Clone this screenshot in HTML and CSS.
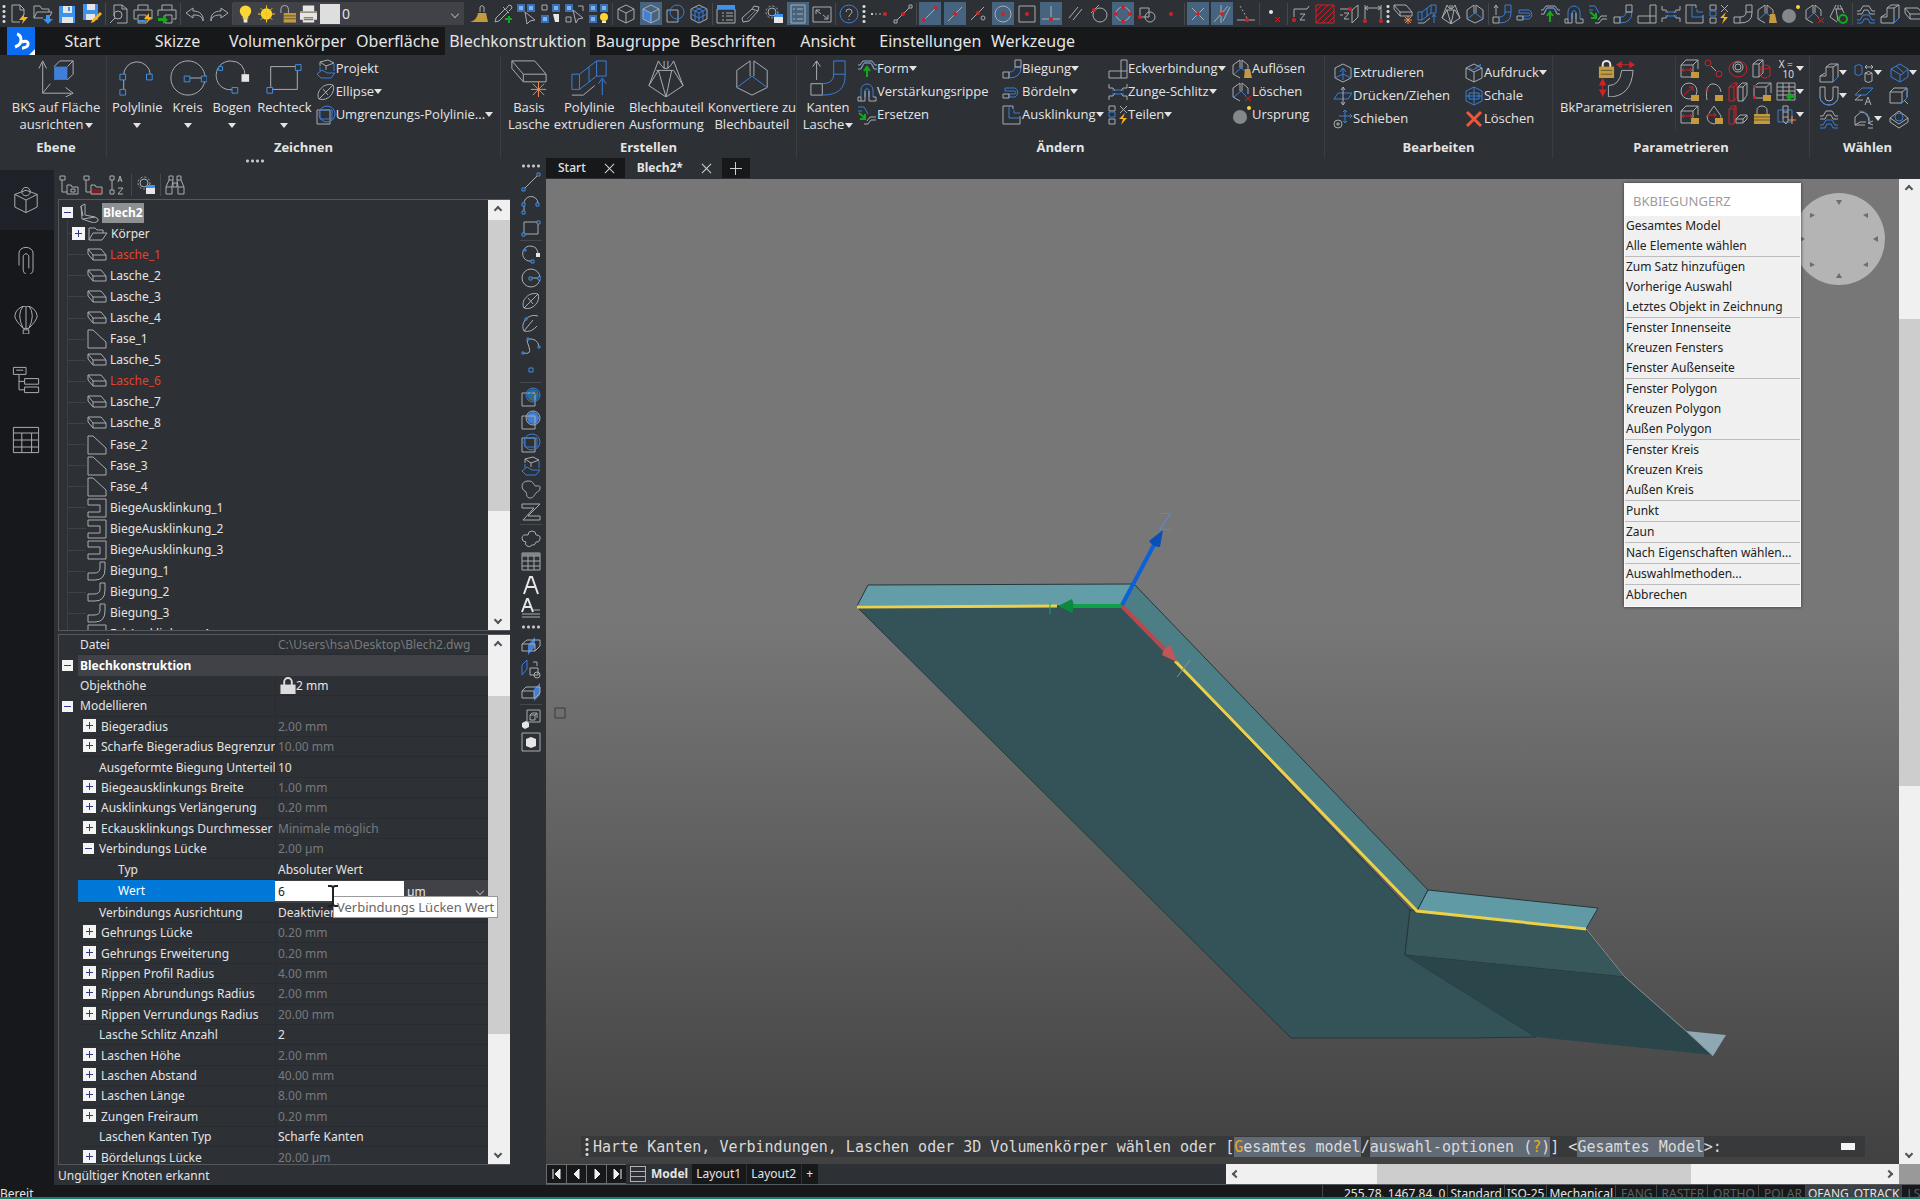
FILE: index.html
```html
<!DOCTYPE html>
<html lang="de">
<head>
    <meta charset="UTF-8">
    <meta name="viewport" content="width=device-width, initial-scale=1.0">
    <title>Blech2.dwg - BricsCAD</title>
    <link rel="stylesheet" href="styles.css">
</head>
<body>

<!-- icon sprite, 20x20 grid -->
<svg class="sprite" xmlns="http://www.w3.org/2000/svg">
    <symbol id="i-new" viewBox="0 0 20 20"><path class="w" d="M11 18H3V1h8l4 4v6M11 1v5h4"/><path class="fo" d="M15 10l-5 6h4l-1 4 6-7h-4z"/></symbol>
    <symbol id="i-open" viewBox="0 0 20 20"><path class="w" d="M1 14V2h6l2 3h7v3M1 14l3-6h15l-2 4M1 14h9"/><path class="fb" d="M13 11h4v4h3l-5 5-5-5h3z"/></symbol>
    <symbol id="i-save" viewBox="0 0 20 20"><path class="fb" d="M2 2h16v17H2z"/><path class="fw" d="M6 2h9v7H6zM5 13h11v6H5z"/><path class="fb" d="M11 3h2v4h-2z"/></symbol>
    <symbol id="i-saveas" viewBox="0 0 20 20"><path class="fb" d="M1 0h15v16H1z"/><path class="fw" d="M5 0h8v6H5zM4 10h9v6H4z"/><path class="fo" d="M18 8l2 2-8 8-3 1 1-3z"/></symbol>
    <symbol id="i-preview" viewBox="0 0 20 20"><path class="w" d="M5 12V1h8l5 4v14H8M13 1v4h5M1 19l5-5"/><circle class="w" cx="9" cy="11" r="4"/></symbol>
    <symbol id="i-print" viewBox="0 0 20 20"><path class="w" d="M5 6V1h10v5M1 6h18v9h-3M4 15H1V6M5 11h8v8H5z"/><path class="fb" d="M5 16h7v2H5z"/><path class="fo" d="M16 9l-5 6h4l-2 5 6-7h-3z"/></symbol>
    <symbol id="i-export" viewBox="0 0 20 20"><path class="w" d="M5 6V1h10v5M1 12V6h18v9h-3M8 11h7v8H8z"/><path class="fg" d="M1 14h5v-3l5 5-5 4v-3H1z"/></symbol>
    <symbol id="i-undo" viewBox="0 0 20 20"><path class="w" d="M8 4L1 9l7 5v-3c6 0 9 1 10 6 1-6-3-10-10-10z"/></symbol>
    <symbol id="i-redo" viewBox="0 0 20 20"><path class="w" d="M12 4l7 5-7 5v-3c-6 0-9 1-10 6-1-6 3-10 10-10z"/></symbol>
    <symbol id="i-bulb" viewBox="0 0 20 20"><circle class="fy" cx="10" cy="7" r="6"/><path class="fy" d="M7 11h6v4H7z"/><path class="fw" d="M8 15h4v4H8z"/></symbol>
    <symbol id="i-sun" viewBox="0 0 20 20"><circle class="fy" cx="10" cy="10" r="6"/><path class="y" d="M10 1v18M1 10h18M4 4l12 12M16 4L4 16"/></symbol>
    <symbol id="i-unlock" viewBox="0 0 20 20"><path class="w" d="M3 9V5a4 4 0 0 1 8 0v4"/><path class="fl" d="M6 9h13v10H6z"/><path class="n" d="M6 12h13M6 15h13"/></symbol>
    <symbol id="i-printer" viewBox="0 0 20 20"><path class="fw" d="M4 1h12v6h3v9h-3v3H4v-3H1V7h3z"/><path class="n" d="M1 8h18M5 14h10M5 16h10"/></symbol>
    <symbol id="i-brush" viewBox="0 0 20 20"><path class="w" d="M11 8V3q2-3 4 0v5"/><path class="fl" d="M9 9h8l2 9H1q7-2 8-9z"/></symbol>
    <symbol id="i-pipette" viewBox="0 0 20 20"><path class="w" d="M2 18l1-4 9-9 3 3-9 9zM10 3l6 6M13 5l3-4q3 0 3 3l-3 3"/><path class="g" d="M16 12v7M12 15h7"/></symbol>
    <symbol id="i-sela" viewBox="0 0 20 20"><path class="bq" d="M1 1h6v6H1zM11 1h6v6h-6z"/><path class="w" d="M8 8l10 8-5 1-3 3z"/></symbol>
    <symbol id="i-selb" viewBox="0 0 20 20"><path class="bq" d="M12 1h6v6h-6zM1 12h6v6H1z"/><path class="w" d="M1 1h5v5H1z"/><path class="fw" d="M12 10h6v8h-4z"/></symbol>
    <symbol id="i-selc" viewBox="0 0 20 20"><path class="bq" d="M1 1h6v6H1z"/><path class="w" d="M13 2h5v5M1 13h5v5H1zM8 6l10 8-5 1-2 4z"/></symbol>
    <symbol id="i-seld" viewBox="0 0 20 20"><path class="bq" d="M1 1h6v6H1zM12 1h6v6h-6zM1 12h6v6H1z"/><circle class="fy" cx="15" cy="13" r="4"/><path class="fw" d="M13 17h4v2h-4z"/></symbol>
    <symbol id="i-cube" viewBox="0 0 20 20"><path class="w" d="M2 5l8-4 8 4v10l-8 4-8-4zM2 5l8 4 8-4M10 9v10"/></symbol>
    <symbol id="i-cubeb" viewBox="0 0 20 20"><path class="fs" d="M2 5l8 4v10l-8-4z"/><path class="w" d="M2 5l8-4 8 4v10l-8 4-8-4zM2 5l8 4 8-4M10 9v10"/></symbol>
    <symbol id="i-cyl" viewBox="0 0 20 20"><path class="w" d="M2 6h11v12H2z"/><circle class="b" cx="12" cy="8" r="7"/></symbol>
    <symbol id="i-cubew" viewBox="0 0 20 20"><path class="w" d="M2 5l8-4 8 4v10l-8 4-8-4z"/><path class="b" d="M2 5l8 4 8-4M10 9v10M6 3l8 4M14 3L6 7v10M14 7v10M2 10l8 4 8-4"/></symbol>
    <symbol id="i-props" viewBox="0 0 20 20"><path class="w" d="M1 5h18v14H1zM6 9h2M6 12h2M6 16h2M10 9h7M10 12h7M10 16h7"/><path class="fb" d="M1 1h18v4H1z"/></symbol>
    <symbol id="i-eraser" viewBox="0 0 20 20"><path class="w" d="M2 14l10-9 6 2-9 10-6 1zM12 5l2-3 5 1-1 4"/><path class="b" d="M7 15l9-9"/></symbol>
    <symbol id="i-gear" viewBox="0 0 20 20"><circle class="w" cx="8" cy="8" r="4"/><circle class="wd" cx="8" cy="8" r="6"/><path class="fw" d="M10 10h9v9h-9z"/><path class="fb" d="M10 10h9v3h-9z"/></symbol>
    <symbol id="i-list" viewBox="0 0 20 20"><path class="w" d="M3 1h14v18H3zM5 5h2M9 5h6M5 10h2M9 10h6M5 15h2M9 15h6"/></symbol>
    <symbol id="i-extents" viewBox="0 0 20 20"><path class="w" d="M1 3h18v15H1zM4 10V6h4M4 6l5 4M16 11v4h-4M16 15l-5-4"/></symbol>
    <symbol id="i-help" viewBox="0 0 20 20"><circle class="b" cx="10" cy="10" r="9"/><path class="w" d="M7 8q0-3 3-3t3 3q0 1-3 4v1M10 15v1"/></symbol>
    <symbol id="i-track" viewBox="0 0 20 20"><path class="wd" d="M2 10h13"/><circle class="fr" cx="16" cy="10" r="2"/><circle class="fw" cx="3" cy="10" r="1"/></symbol>
    <symbol id="i-line" viewBox="0 0 20 20"><path class="w" d="M4 16L16 4M1 16h3v3H1zM16 1h3v3h-3z"/><circle class="fr" cx="10" cy="10" r="2"/></symbol>
    <symbol id="i-linie" viewBox="0 0 20 20"><path class="w" d="M3 17L17 3"/><path class="bs" d="M1 16h3v3H1zM16 1h3v3h-3z"/></symbol>
    <symbol id="i-end" viewBox="0 0 20 20"><path class="w" d="M3 17L17 3"/><circle class="fr" cx="4" cy="16" r="2"/><circle class="fr" cx="16" cy="4" r="2"/></symbol>
    <symbol id="i-mid" viewBox="0 0 20 20"><path class="w" d="M3 17L17 3"/><circle class="fr" cx="10" cy="10" r="2"/></symbol>
    <symbol id="i-near" viewBox="0 0 20 20"><path class="w" d="M2 16L15 3"/><circle class="fr" cx="9" cy="9" r="2"/><circle class="w" cx="14" cy="14" r="2"/></symbol>
    <symbol id="i-cen" viewBox="0 0 20 20"><circle class="w" cx="10" cy="10" r="8"/><circle class="fr" cx="10" cy="10" r="2"/></symbol>
    <symbol id="i-geo" viewBox="0 0 20 20"><path class="w" d="M2 2h16v16H2z"/><circle class="fr" cx="10" cy="10" r="2"/></symbol>
    <symbol id="i-perp" viewBox="0 0 20 20"><path class="w" d="M10 2v12M1 15h18"/><circle class="fr" cx="10" cy="15" r="2"/></symbol>
    <symbol id="i-par" viewBox="0 0 20 20"><path class="w" d="M4 14L13 3M8 16l9-11"/></symbol>
    <symbol id="i-tan" viewBox="0 0 20 20"><circle class="w" cx="11" cy="11" r="7"/><path class="w" d="M2 9l8-8"/><circle class="fr" cx="5" cy="6" r="2"/></symbol>
    <symbol id="i-quad" viewBox="0 0 20 20"><circle class="w" cx="10" cy="10" r="7"/><circle class="fr" cx="10" cy="3" r="2"/><circle class="fr" cx="10" cy="17" r="2"/><circle class="fr" cx="3" cy="10" r="2"/><circle class="fr" cx="17" cy="10" r="2"/></symbol>
    <symbol id="i-ins" viewBox="0 0 20 20"><path class="w" d="M3 4h9v9H3z"/><circle class="w" cx="13" cy="13" r="5"/><circle class="fr" cx="3" cy="13" r="2"/></symbol>
    <symbol id="i-node" viewBox="0 0 20 20"><circle class="fr" cx="10" cy="10" r="2"/></symbol>
    <symbol id="i-int" viewBox="0 0 20 20"><path class="w" d="M4 4l12 12M16 4L4 16"/><circle class="fr" cx="10" cy="10" r="2"/></symbol>
    <symbol id="i-app" viewBox="0 0 20 20"><path class="w" d="M2 18L16 2M9 1v18M18 3l-7 14"/><circle class="fr" cx="10" cy="10" r="2"/></symbol>
    <symbol id="i-ext" viewBox="0 0 20 20"><path class="wd" d="M4 2l7 12"/><path class="w" d="M1 16h18"/><circle class="fr" cx="11" cy="16" r="2"/></symbol>
    <symbol id="i-zx" viewBox="0 0 20 20"><circle class="fw" cx="8" cy="8" r="2"/><path class="r" d="M12 13l5 5M17 13l-5 5"/></symbol>
    <symbol id="i-z1" viewBox="0 0 20 20"><path class="w" d="M3 5h13M3 5v8M16 5l2-3M9 10h5l-5 6h5"/><circle class="fr" cx="3" cy="16" r="2"/></symbol>
    <symbol id="i-hatch" viewBox="0 0 20 20"><path class="r" d="M1 1h18v18H1z"/><path class="r" d="M1 7l6-6M1 13L13 1M1 19L19 1M7 19L19 7M13 19l6-6"/></symbol>
    <symbol id="i-z2" viewBox="0 0 20 20"><path class="w" d="M13 6v13l6-6V1zM1 11h3M5 9h5l-5 6h5M1 5h10"/><circle class="fr" cx="11" cy="5" r="2"/></symbol>
    <symbol id="i-dim" viewBox="0 0 20 20"><path class="w" d="M2 1v14M18 1v14M2 4h16M5 2L2 4l3 2M15 2l3 2-3 2"/><circle class="fr" cx="2" cy="17" r="2"/><circle class="fr" cx="18" cy="17" r="2"/></symbol>
    <symbol id="i-basis" viewBox="0 0 20 20"><path class="w" d="M1 1h12l6 7v4H7L1 5zM1 1l6 7h12M7 8v4"/><path class="o" d="M15 12v8M11 16h8M12 13l6 6M18 13l-6 6"/></symbol>
    <symbol id="i-extr" viewBox="0 0 20 20"><path class="b" d="M1 8h4l9-7h5v8h-5l-9 7H1zM5 8v8M14 1v8M10 4v8"/><path class="w" d="M1 19h6l6-5"/><path class="b" d="M17 19v-8M15 13l2-3 2 3"/></symbol>
    <symbol id="i-ausf" viewBox="0 0 20 20"><path class="w" d="M6 1L1 14l9 6 9-6-5-13M5 6h9M6 1q4 8 8 0M6 6l4 14 3-14M1 14l5-8M19 14l-5-8M9 1v4M11 1v4"/></symbol>
    <symbol id="i-konv" viewBox="0 0 20 20"><path class="w" d="M9 1L2 6v9l8 4 8-4V6l-7-5M9 1v8M11 1v8"/><path class="b" d="M10 9l-8 6M10 9l8 6M10 9"/></symbol>
    <symbol id="i-kant" viewBox="0 0 20 20"><path class="w" d="M4 11V1M2 4l2-3 2 3M1 13h6v6H1z"/><path class="b" d="M7 13q6 0 6-5V1h6v8q0 10-12 10M13 8h6"/></symbol>
    <symbol id="i-bord" viewBox="0 0 20 20"><path class="b" d="M3 6h10a5 5 0 0 1 0 9H7v-3h6q2-1 0-3H3z"/><path class="w" d="M1 12h6v4H1z"/></symbol>
    <symbol id="i-form" viewBox="0 0 20 20"><path class="w" d="M1 10h3l3-6h7l3 6h3M1 6h2l3-4h9l3 4h2"/><path class="b" d="M4 8l3-4h7l3 4"/><path class="g" d="M10 18V9M7 12l3-4 3 4"/></symbol>
    <symbol id="i-rippe" viewBox="0 0 20 20"><path class="b" d="M4 15V8a6 6 0 0 1 12 0v7M8 15V8q2-3 4 0v7"/><path class="w" d="M1 15h3v4h4V9M1 15v4h3M12 9v10h7v-4h-3"/></symbol>
    <symbol id="i-ersetz" viewBox="0 0 20 20"><path class="b" d="M1 2h6l4 7M1 6h4"/><path class="w" d="M19 12h-6l-3 4M19 15h-5l-3 4H7"/><path class="g" d="M2 8l6 5M8 9v5H3"/></symbol>
    <symbol id="i-bieg" viewBox="0 0 20 20"><path class="b" d="M7 13q6 0 6-5h6q0 11-12 11M7 13v6"/><path class="w" d="M1 13h6v6H1zM13 8V1h6v7z"/></symbol>
    <symbol id="i-eck" viewBox="0 0 20 20"><path class="w" d="M1 12h12V1h6v18H1zM13 12h6M13 12v7"/></symbol>
    <symbol id="i-zunge" viewBox="0 0 20 20"><path class="w" d="M1 2v4h4l2 3M19 2v4h-4l-2 3M1 18v-4h4l2-3M19 18v-4h-4l-2-3"/><path class="b" d="M4 8h12M4 12h12"/></symbol>
    <symbol id="i-ausk" viewBox="0 0 20 20"><path class="w" d="M7 1H1v18h17v-8"/><path class="b" d="M7 1v12h11M12 5v3h6"/><path class="w" d="M7 1h4v3"/></symbol>
    <symbol id="i-teil" viewBox="0 0 20 20"><path class="w" d="M1 1h6v5H1zM1 14h6v5H1z"/><path class="b" d="M1 7h6v5H1z"/><path class="w" d="M12 1l7 7M19 1l-7 7"/><path class="fo" d="M17 8l-6 6h4l-2 6 6-7h-4z"/></symbol>
    <symbol id="i-bend" viewBox="0 0 20 20"><path class="w" d="M1 13h6q6 0 6-5V1h6v8q0 10-12 10H1zM7 13v6M13 8h6"/></symbol>
    <symbol id="i-aufl" viewBox="0 0 20 20"><path class="w" d="M8 1L1 6v9l7 4M8 1v8M10 1v8M10 1l6 5v4"/><path class="b" d="M9 9l-7 6M9 9l7 5"/><path class="fl" d="M13 10h5l2 9h-8z"/></symbol>
    <symbol id="i-ball" viewBox="0 0 20 20"><circle class="fgr" cx="8" cy="12" r="7"/><circle class="fy" cx="17" cy="3" r="2"/></symbol>
    <symbol id="i-losch" viewBox="0 0 20 20"><path class="w" d="M8 1L1 6v9l7 4M8 1v8M10 1v8M10 1l6 5v6"/><path class="b" d="M9 9l-7 6M9 9l5 5"/><path class="r" d="M13 14l6 5M19 14l-6 5"/></symbol>
    <symbol id="i-rot" viewBox="0 0 20 20"><path class="w" d="M7 1L1 13l7 5M11 1l4 8M6 5h8M7 5l2 12M9 1v4"/><circle class="g" cx="14" cy="15" r="4"/></symbol>
    <symbol id="i-wave" viewBox="0 0 20 20"><path class="w" d="M1 7h3l3-5h6l3 5h3M1 10h5l2-4h4l2 4h5"/><path class="b" d="M1 16h3l3-5h6l3 5h3M1 19h5l2-4h4l2 4h5"/></symbol>
    <symbol id="i-step" viewBox="0 0 20 20"><path class="w" d="M1 13h6V4h7v15H1zM7 4l4-3h8l-5 3M19 1v13l-5 5M1 13l5-3"/><path class="b" d="M19 14l-5 5"/></symbol>
    <symbol id="i-projekt" viewBox="0 0 20 20"><path class="w" d="M4 3l8-2 6 3-8 3zM4 3v4M10 7v4"/><path class="b" d="M1 15l5-4 5 3h8l-4 5H5zM4 8v4M18 5v7"/></symbol>
    <symbol id="i-ellipse" viewBox="0 0 20 20"><path class="w" d="M3 17C-1 10 8 0 17 3c3 7-5 17-14 14zM3 17L17 3M7 7l5 6"/></symbol>
    <symbol id="i-umgr" viewBox="0 0 20 20"><path class="w" d="M1 5h13v14H1z"/><circle class="b" cx="11" cy="9" r="8"/><path class="b" d="M4 5h12v9H4z"/></symbol>
    <symbol id="i-umgr2" viewBox="0 0 20 20"><circle class="fc" cx="12" cy="8" r="6"/><path class="w" d="M1 6h13v13H1z"/><circle class="b" cx="12" cy="8" r="7"/><path class="n" d="M6 10l6-6M7 14l9-9"/></symbol>
    <symbol id="i-umgr3" viewBox="0 0 20 20"><circle class="fs" cx="12" cy="8" r="6"/><path class="w" d="M1 6h13v13H1z"/><circle class="w" cx="12" cy="8" r="7"/></symbol>
    <symbol id="i-bks" viewBox="0 0 20 20"><path class="w" d="M3 18V2M1 5l2-4 2 4M3 18h15M15 15l4 3-4 2M3 18l4-5"/><path class="fs" d="M9 4h7v7H9z"/><path class="w" d="M9 4l3-3h7l-3 3M19 1v7l-3 3"/></symbol>
    <symbol id="i-poly" viewBox="0 0 20 20"><path class="w" d="M3 16V9a7 7 0 0 1 14-1"/><path class="bs" d="M1 8h3v3H1zM1 16h3v3H1zM15 8h3v3h-3z"/></symbol>
    <symbol id="i-kreis" viewBox="0 0 20 20"><circle class="w" cx="10" cy="10" r="9"/><path class="w" d="M10 10h9"/><path class="bs" d="M8 9h3v3H8zM17 9h3v3h-3z"/></symbol>
    <symbol id="i-bogen" viewBox="0 0 20 20"><path class="w" d="M11 16C0 18-2 2 9 1q8 0 8 9"/><path class="bs" d="M10 15h3v3h-3zM3 4h2v2H3z"/><path class="fw" d="M15 8h4v4h-4z"/></symbol>
    <symbol id="i-recht" viewBox="0 0 20 20"><path class="w" d="M3 4h14v12H3z"/><path class="bs" d="M1 15h3v3H1zM16 3h3v3h-3z"/></symbol>
    <symbol id="i-extrude" viewBox="0 0 20 20"><path class="w" d="M2 5l8-4 8 4v10l-8 4-8-4z"/><path class="b" d="M10 17V6M7 9l3-4 3 4M2 15l8-4 8 4"/></symbol>
    <symbol id="i-push" viewBox="0 0 20 20"><path class="b" d="M1 13l4-6h14l-4 6z"/><path class="w" d="M10 1v18M8 4l2-3 2 3M8 16l2 3 2-3"/></symbol>
    <symbol id="i-move" viewBox="0 0 20 20"><path class="b" d="M12 1v13M6 7h13M10 3l2-2 2 2M17 5l2 2-2 2M10 12l2 2 2-2"/><circle class="w" cx="5" cy="15" r="4"/><path class="w" d="M3 15h4M5 13v4"/></symbol>
    <symbol id="i-schale" viewBox="0 0 20 20"><path class="b" d="M2 5l8-4 8 4v10l-8 4-8-4zM2 10h16M10 1v18M5 7h10v6H5z"/></symbol>
    <symbol id="i-aufdr" viewBox="0 0 20 20"><path class="w" d="M2 5l8-4 8 4v10l-8 4-8-4zM2 5l8 4 8-4M10 9v10"/><path class="b" d="M5 5l4 2 8-6M11 6l6-4"/></symbol>
    <symbol id="i-x" viewBox="0 0 20 20"><path class="ox" d="M3 3l14 14M17 3L3 17"/></symbol>
    <symbol id="i-bkpar" viewBox="0 0 20 20"><path class="wt" d="M3 5V3a2 2 0 0 1 4 0v2"/><path class="fl" d="M1 4h8v6H1z"/><path class="n" d="M2 6h6M2 8h6"/><path class="r" d="M12 3h6M3 12v6"/><path class="fr" d="M10 3l3-2v4zM20 3l-3-2v4zM3 10l-2 4h4zM3 20l-2-4h4z"/><path class="w" d="M6 14q6 0 7-8h6q-1 14-13 14z"/></symbol>
    <symbol id="i-p1" viewBox="0 0 20 20"><path class="w" d="M1 6h12v12H1zM1 6l5-5h12l-5 5M18 1v9"/><path class="r" d="M2 11h10M4 9l-2 2 2 2M10 9l2 2-2 2"/><path class="fl" d="M11 13h8v6h-8z"/></symbol>
    <symbol id="i-p2" viewBox="0 0 20 20"><circle class="r" cx="4" cy="4" r="3"/><circle class="r" cx="15" cy="15" r="3"/><path class="w" d="M7 7l5 5"/></symbol>
    <symbol id="i-p3" viewBox="0 0 20 20"><ellipse class="r" cx="10" cy="10" rx="9" ry="8"/><circle class="w" cx="10" cy="8" r="5"/><circle class="w" cx="10" cy="8" r="3"/></symbol>
    <symbol id="i-p4" viewBox="0 0 20 20"><path class="w" d="M1 5l5-4h5v13l-4 4H1zM1 5h6v13M7 5l4-4"/><path class="r" d="M9 8v9q4 4 9 0V8q-4-4-9 0 5 4 9 0"/></symbol>
    <symbol id="i-p6" viewBox="0 0 20 20"><circle class="w" cx="9" cy="9" r="8"/><path class="r" d="M4 13l9-8M9 5h4v4"/><path class="fl" d="M11 13h8v6h-8z"/></symbol>
    <symbol id="i-p7" viewBox="0 0 20 20"><path class="w" d="M3 18C1 8 4 1 10 2q6 1 7 8"/><path class="r" d="M3 6v4M1 8h4"/><path class="fl" d="M11 13h8v6h-8z"/></symbol>
    <symbol id="i-p8" viewBox="0 0 20 20"><path class="r" d="M1 5l5-4h3v14l-3 4H1zM1 5h5v14M6 5l3-4"/><path class="w" d="M10 5l4-4h5v12l-4 6h-5zM10 5h5v14M15 5l4-4"/></symbol>
    <symbol id="i-p9" viewBox="0 0 20 20"><path class="w" d="M2 5h12v11H2zM2 5l4-4h13l-5 4M19 1v10"/><path class="fr" d="M1 3h3v3H1zM1 14h3v3H1z"/><path class="fl" d="M11 13h8v6h-8z"/></symbol>
    <symbol id="i-p10" viewBox="0 0 20 20"><path class="w" d="M1 1h18v17H1zM1 5h18M1 9h18M1 13h18M7 1v17M13 1v17"/><path class="fg" d="M19 13h-4v-3l-5 5 5 4v-3h4z"/></symbol>
    <symbol id="i-p12" viewBox="0 0 20 20"><path class="w" d="M10 1L3 11q0 7 7 8 7-1 7-8z"/><path class="r" d="M3 10h9M5 8l-2 2 2 2M10 8l2 2-2 2"/><path class="fl" d="M11 13h8v6h-8z"/></symbol>
    <symbol id="i-p13" viewBox="0 0 20 20"><path class="r" d="M1 4l3-3h4v11l-2 7H1zM1 4h5v15M6 4l2-3"/><path class="w" d="M8 14l4-4h7l-4 4zM8 14v4h7l4-4v-4M15 14v4"/></symbol>
    <symbol id="i-lock" viewBox="0 0 20 20"><path class="w" d="M5 9V5a5 4 0 0 1 10 0v4"/><path class="fl" d="M2 9h16v10H2z"/><path class="n" d="M2 12h16M2 15h16"/></symbol>
    <symbol id="i-p15" viewBox="0 0 20 20"><path class="b" d="M2 5h14v12H2z"/><path class="w" d="M7 1h5v15l-2 3-3-3zM7 7h5M7 12h5"/><path class="o" d="M16 11v8M12 15h8"/></symbol>
    <symbol id="i-s2" viewBox="0 0 20 20"><path class="b" d="M1 3v8q3 3 7 0V3q-3-3-7 0z"/><path class="w" d="M11 10v8q3 3 7 0v-8q-3-3-7 0 4 3 7 0M11 4h8M13 2l-2 2 2 2M17 2l2 2-2 2"/></symbol>
    <symbol id="i-s3" viewBox="0 0 20 20"><path class="b" d="M2 6l9-5 8 5-7 6zM2 6v8l9 5V12M19 6v8l-8 5M7 3l8 7"/></symbol>
    <symbol id="i-s4" viewBox="0 0 20 20"><path class="w" d="M1 1v10a9 8 0 0 0 18 0V1h-5v10a4 4 0 0 1-8 0V1z"/><path class="b" d="M1 11a9 8 0 0 0 18 0"/></symbol>
    <symbol id="i-s5" viewBox="0 0 20 20"><path class="b" d="M1 9l7-7h11l-7 7z"/><path class="w" d="M1 14l6-5M11 19l3-8 3 8M12 16h4M1 14h8"/></symbol>
    <symbol id="i-s6" viewBox="0 0 20 20"><path class="w" d="M1 6h12v11H1zM1 6l4-4h13l-5 4M18 2v9"/><path class="b" d="M13 17l5-5V2"/><path class="w" d="M15 14l4 4"/></symbol>
    <symbol id="i-s8" viewBox="0 0 20 20"><path class="w" d="M1 8v8l5-3h6M1 8l6-5q8 1 8 10M1 16h10M19 12l-5 2 5 2M14 19h5"/><path class="b" d="M5 2q10 0 11 10"/></symbol>
    <symbol id="i-s9" viewBox="0 0 20 20"><path class="w" d="M1 9l9-7 9 7-9 6zM1 9v4l9 6 9-6V9"/><circle class="b" cx="10" cy="8" r="4"/></symbol>
    <symbol id="i-spline" viewBox="0 0 20 20"><path class="w" d="M2 16q9 2 6-6T7 2q9-1 11 7"/><path class="bs" d="M1 15h2v2H1zM6 1h2v2H6zM17 9h2v2h-2z"/></symbol>
    <symbol id="i-earc" viewBox="0 0 20 20"><path class="w" d="M17 2C6-1-1 10 3 17q7 2 13-5M3 17L12 6"/><path class="bs" d="M4 4h2v2H4z"/></symbol>
    <symbol id="i-point" viewBox="0 0 20 20"><path class="bs" d="M8 8h4v4H8z"/></symbol>
    <symbol id="i-region" viewBox="0 0 20 20"><path class="w" d="M5 13C-1 10 0 2 7 2s5 5 8 5 4-1 4 2-2 3-4 5-2 5-6 5-3-4-4-6z"/></symbol>
    <symbol id="i-wipe" viewBox="0 0 20 20"><path class="w" d="M1 2h18L7 14h12v4H2L13 6H1z"/></symbol>
    <symbol id="i-cloud" viewBox="0 0 20 20"><path class="w" d="M7 6q0-4 4-4t4 4q5 0 4 4t-4 3q-1 4-4 3-2 3-5 1t-1-4q-4 0-4-4t6-3z"/></symbol>
    <symbol id="i-table" viewBox="0 0 20 20"><path class="w" d="M1 1h18v17H1zM1 4h18M1 9h18M1 14h18M7 4v14M13 4v14"/><path class="fgr" d="M1 1h18v3H1z"/></symbol>
    <symbol id="i-text" viewBox="0 0 20 20"><path class="wt" d="M3 19L9 2h2l6 17M6 12h8"/></symbol>
    <symbol id="i-mtext" viewBox="0 0 20 20"><path class="wt" d="M1 14L6 1h1l5 13M3 9h7"/><path class="w" d="M12 12h7M1 16h18M1 19h18"/></symbol>
    <symbol id="i-sec" viewBox="0 0 20 20"><path class="fs" d="M7 9l7-8v10l-7 8z"/><path class="w" d="M1 8l5-4h13v6l-5 5H1zM1 8h13v7"/></symbol>
    <symbol id="i-sec2" viewBox="0 0 20 20"><path class="b" d="M1 6l5-5v9l-5 6z"/><path class="w" d="M9 9h8v7H9zM12 3h4v4"/><circle class="w" cx="16" cy="16" r="3"/></symbol>
    <symbol id="i-sec3" viewBox="0 0 20 20"><path class="fs" d="M13 7l6-6v12l-6 6z"/><path class="w" d="M1 9l4-4h14v6l-5 5H1zM1 9h12v7"/></symbol>
    <symbol id="i-blk" viewBox="0 0 20 20"><path class="w" d="M6 1h13v12H6zM9 6h5v5H9zM9 6l2-2h5l-2 2M16 4v5"/><path class="fw" d="M1 14l4-2 3 2v4l-4 2-3-2z"/></symbol>
    <symbol id="i-blk2" viewBox="0 0 20 20"><path class="w" d="M1 1h18v18H1z"/><path class="fw" d="M5 7l5-2 5 2v7l-5 2-5-2z"/></symbol>
    <symbol id="i-side1" viewBox="0 0 20 20"><path class="w" d="M2 6l8-3 8 3v9l-8 4-8-4zM2 6l8 4 8-4M10 10v9"/><ellipse class="w" cx="10" cy="4" rx="3" ry="3"/></symbol>
    <symbol id="i-side2" viewBox="0 0 20 20"><path class="w" d="M5 14V5a5 4 0 0 1 10 0v12a3 3 0 0 1-7 0V7q2-3 4 0v9"/></symbol>
    <symbol id="i-side3" viewBox="0 0 20 20"><path class="w" d="M10 0a8 8 0 0 0-8 7q0 3 6 9h4q6-6 6-9a8 8 0 0 0-8-7zM8 16Q3 6 8 0M12 16q5-10 0-16M10 0v16M8 17h4v3H8z"/></symbol>
    <symbol id="i-side4" viewBox="0 0 20 20"><path class="w" d="M1 1h9v5H1zM3 3h5M5 6v11h4M5 11h4M9 9h10v4H9zM9 15h10v4H9z"/></symbol>
    <symbol id="i-side5" viewBox="0 0 20 20"><path class="w" d="M1 1h18v18H1zM1 5h18M1 10h18M1 15h18M7 5v14M14 5v14"/></symbol>
    <symbol id="i-folder" viewBox="0 0 20 20"><path class="w" d="M1 16V4h6l2 2h6v3M1 16l4-7h14l-5 7z"/></symbol>
    <symbol id="i-lasche" viewBox="0 0 20 20"><path class="w" d="M1 4h13l5 6v5H6L1 9zM1 4l5 6h13M6 10v5"/></symbol>
    <symbol id="i-fase" viewBox="0 0 20 20"><path class="w" d="M1 1h5l13 12v6H1z"/></symbol>
    <symbol id="i-notch" viewBox="0 0 20 20"><path class="w" d="M1 1h18v18H1v-5h12V7H1z"/></symbol>
    <symbol id="i-bieg2" viewBox="0 0 20 20"><path class="w" d="M1 12h6q6 0 6-5V1h5v7q0 11-10 11H1z"/></symbol>
    <symbol id="i-part" viewBox="0 0 20 20"><path class="w" d="M2 3l4-2v11l10 2 3 2v2l-4 2-12-4zM2 3l2 10M4 16l12-2"/></symbol>
    <symbol id="i-t1" viewBox="0 0 20 20"><path class="w" d="M1 1h5v4H1zM3 5v12h5M8 10h4l1 2h6v7H8z"/><path class="w" d="M12 14h4v3h-4z"/></symbol>
    <symbol id="i-t2" viewBox="0 0 20 20"><path class="w" d="M1 1h5v4H1zM3 5v12h5M8 10h4l1 2h6v7H8z"/><path class="frd" d="M9 14h9v4H9z"/></symbol>
    <symbol id="i-t3" viewBox="0 0 20 20"><path class="w" d="M3 1h4v4H3zM3 15h4v4H3zM5 5v10M11 7l2-6 2 6M12 5h3M11 13h5l-5 6h5"/></symbol>
    <symbol id="i-find" viewBox="0 0 20 20"><path class="w" d="M4 1h4v4H4zM12 1h4v4h-4zM4 5l-3 7v7h6v-7l1-7M16 5l3 7v7h-6v-7l-1-7M1 12h6M13 12h6M8 8h4v4H8z"/></symbol>
</svg>

<div class="quickbar">
    <div class="tools" data-icons="| new open save saveas - preview print export - undo redo -"></div>
    <div class="layer">
        <svg class="ic"><use href="#i-bulb"/></svg>
        <svg class="ic"><use href="#i-sun"/></svg>
        <svg class="ic"><use href="#i-unlock"/></svg>
        <svg class="ic"><use href="#i-printer"/></svg>
        <span class="swatch"></span>
        <select aria-label="Layer"><option>0</option></select>
        <i class="chev down"></i>
    </div>
    <div class="tools" data-icons="brush pipette sela selb selc seld - cube *cubeb cyl cubew - props eraser gear *list extents - help | track line - *end *mid near *cen geo *perp par tan *quad ins node - *int *app ext - zx - z1 hatch z2 dim | basis extr ausf konv - kant bord form rippe ersetz bieg eck zunge ausk teil bend aufl ball losch rot - wave step lasche"></div>
</div>

<nav class="tabs">
    <button class="app" aria-label="Menü"><svg viewBox="0 0 28 28"><path d="M10 7q4 1 4 6 0 5-6 7M15 21h1q6-1 5-5-1-3-6-1"/><path class="corner" d="M28 22v6h-6z"/></svg></button>
    <a href="#">Start</a>
    <a href="#">Skizze</a>
    <a href="#">Volumenkörper</a>
    <a href="#">Oberfläche</a>
    <a href="#" class="active">Blechkonstruktion</a>
    <a href="#">Baugruppe</a>
    <a href="#">Beschriften</a>
    <a href="#">Ansicht</a>
    <a href="#">Einstellungen</a>
    <a href="#">Werkzeuge</a>
</nav>

<div class="ribbon">
    <section class="group ebene">
        <div class="cmds">
            <button class="big"><svg><use href="#i-bks"/></svg>BKS auf Fläche<br><span class="dd">ausrichten</span></button>
        </div>
        <h3>Ebene</h3>
    </section>
    <section class="group zeichnen">
        <div class="cmds">
            <button class="big"><svg><use href="#i-poly"/></svg>Polylinie<br><span class="dd"></span></button>
            <button class="big"><svg><use href="#i-kreis"/></svg>Kreis<br><span class="dd"></span></button>
            <button class="big"><svg><use href="#i-bogen"/></svg>Bogen<br><span class="dd"></span></button>
            <button class="big"><svg><use href="#i-recht"/></svg>Rechteck<br><span class="dd"></span></button>
            <div class="col">
                <button><svg class="ic"><use href="#i-projekt"/></svg>Projekt</button>
                <button class="dd"><svg class="ic"><use href="#i-ellipse"/></svg>Ellipse</button>
                <button class="dd"><svg class="ic"><use href="#i-umgr"/></svg>Umgrenzungs-Polylinie...</button>
            </div>
        </div>
        <h3>Zeichnen</h3>
    </section>
    <section class="group erstellen">
        <div class="cmds">
            <button class="big"><svg><use href="#i-basis"/></svg>Basis<br>Lasche</button>
            <button class="big"><svg><use href="#i-extr"/></svg>Polylinie<br>extrudieren</button>
            <button class="big"><svg><use href="#i-ausf"/></svg>Blechbauteil<br>Ausformung</button>
            <button class="big"><svg><use href="#i-konv"/></svg>Konvertiere zu<br>Blechbauteil</button>
        </div>
        <h3>Erstellen</h3>
    </section>
    <section class="group aendern">
        <div class="cmds">
            <button class="big"><svg><use href="#i-kant"/></svg>Kanten<br><span class="dd">Lasche</span></button>
            <div class="col c1">
                <button class="dd"><svg class="ic"><use href="#i-form"/></svg>Form</button>
                <button><svg class="ic"><use href="#i-rippe"/></svg>Verstärkungsrippe</button>
                <button><svg class="ic"><use href="#i-ersetz"/></svg>Ersetzen</button>
            </div>
            <div class="col c2">
                <button class="dd"><svg class="ic"><use href="#i-bieg"/></svg>Biegung</button>
                <button class="dd"><svg class="ic"><use href="#i-bord"/></svg>Bördeln</button>
                <button class="dd"><svg class="ic"><use href="#i-ausk"/></svg>Ausklinkung</button>
            </div>
            <div class="col c3">
                <button class="dd"><svg class="ic"><use href="#i-eck"/></svg>Eckverbindung</button>
                <button class="dd"><svg class="ic"><use href="#i-zunge"/></svg>Zunge-Schlitz</button>
                <button class="dd"><svg class="ic"><use href="#i-teil"/></svg>Teilen</button>
            </div>
            <div class="col">
                <button><svg class="ic"><use href="#i-aufl"/></svg>Auflösen</button>
                <button><svg class="ic"><use href="#i-losch"/></svg>Löschen</button>
                <button><svg class="ic"><use href="#i-ball"/></svg>Ursprung</button>
            </div>
        </div>
        <h3>Ändern</h3>
    </section>
    <section class="group bearbeiten">
        <div class="cmds low">
            <div class="col c4">
                <button><svg class="ic"><use href="#i-extrude"/></svg>Extrudieren</button>
                <button><svg class="ic"><use href="#i-push"/></svg>Drücken/Ziehen</button>
                <button><svg class="ic"><use href="#i-move"/></svg>Schieben</button>
            </div>
            <div class="col">
                <button class="dd"><svg class="ic"><use href="#i-aufdr"/></svg>Aufdruck</button>
                <button><svg class="ic"><use href="#i-schale"/></svg>Schale</button>
                <button><svg class="ic"><use href="#i-x"/></svg>Löschen</button>
            </div>
        </div>
        <h3>Bearbeiten</h3>
    </section>
    <section class="group parametrieren">
        <div class="cmds">
            <button class="big"><svg><use href="#i-bkpar"/></svg>BkParametrisieren</button>
            <div class="icongrid params">
                <button><svg class="ic"><use href="#i-p1"/></svg></button>
                <button><svg class="ic"><use href="#i-p2"/></svg></button>
                <button><svg class="ic"><use href="#i-p3"/></svg></button>
                <button><svg class="ic"><use href="#i-p4"/></svg></button>
                <button class="dd formula"><span>X =<br>&nbsp; 10</span></button>
                <button><svg class="ic"><use href="#i-p6"/></svg></button>
                <button><svg class="ic"><use href="#i-p7"/></svg></button>
                <button><svg class="ic"><use href="#i-p8"/></svg></button>
                <button><svg class="ic"><use href="#i-p9"/></svg></button>
                <button class="dd"><svg class="ic"><use href="#i-p10"/></svg></button>
                <button><svg class="ic"><use href="#i-p1"/></svg></button>
                <button><svg class="ic"><use href="#i-p12"/></svg></button>
                <button><svg class="ic"><use href="#i-p13"/></svg></button>
                <button><svg class="ic"><use href="#i-lock"/></svg></button>
                <button class="dd"><svg class="ic"><use href="#i-p15"/></svg></button>
            </div>
        </div>
        <h3>Parametrieren</h3>
    </section>
    <section class="group waehlen">
        <div class="cmds low">
            <div class="icongrid select">
                <button class="dd"><svg class="ic"><use href="#i-step"/></svg></button>
                <button class="dd"><svg class="ic"><use href="#i-s2"/></svg></button>
                <button class="dd"><svg class="ic"><use href="#i-s3"/></svg></button>
                <button class="dd"><svg class="ic"><use href="#i-s4"/></svg></button>
                <button><svg class="ic"><use href="#i-s5"/></svg></button>
                <button><svg class="ic"><use href="#i-s6"/></svg></button>
                <button><svg class="ic"><use href="#i-wave"/></svg></button>
                <button class="dd"><svg class="ic"><use href="#i-s8"/></svg></button>
                <button><svg class="ic"><use href="#i-s9"/></svg></button>
            </div>
        </div>
        <h3>Wählen</h3>
    </section>
</div>

<div class="workspace">
    <div class="left">
        <div class="dock-grip"><i class="dots"></i></div>
        <div class="panels">
            <div class="sidebar">
                <button class="active" aria-label="Struktur"><svg><use href="#i-side1"/></svg></button>
                <button aria-label="Anhänge"><svg><use href="#i-side2"/></svg></button>
                <button aria-label="Materialien"><svg><use href="#i-side3"/></svg></button>
                <button aria-label="Baugruppe"><svg><use href="#i-side4"/></svg></button>
                <button aria-label="Tabelle"><svg><use href="#i-side5"/></svg></button>
            </div>
            <div class="browser">
                <div class="tools" data-icons="t1 t2 t3 - gear - find"></div>
                <div class="box treebox">
                    <ul class="tree" id="tree"></ul>
                    <div class="vscroll">
                        <button aria-label="Hoch"><i class="chev up"></i></button>
                        <div class="track" style="--before:0;--size:291;--after:99"><i></i></div>
                        <button aria-label="Runter"><i class="chev down"></i></button>
                    </div>
                </div>
                <div class="box propbox">
                    <div class="proplist">
                        <table class="props"><tbody id="props"></tbody></table>
                    </div>
                    <div class="vscroll">
                        <button aria-label="Hoch"><i class="chev up"></i></button>
                        <div class="track" style="--before:41;--size:338;--after:110"><i></i></div>
                        <button aria-label="Runter"><i class="chev down"></i></button>
                    </div>
                    <div class="tooltip">Verbindungs Lücken Wert</div>
                    <svg class="ibeam" viewBox="0 0 12 22"><path d="M1 1h3l2 1 2-1h3M6 2v18M1 21h3l2-1 2 1h3"/></svg>
                </div>
                <p class="hint">Ungültiger Knoten erkannt</p>
            </div>
        </div>
    </div>

    <div class="drawbar">
        <div class="tools" data-icons="| linie poly recht - bogen kreis ellipse earc spline point - umgr2 umgr3 umgr projekt region wipe - cloud table text mtext | sec sec2 sec3 - blk blk2"></div>
    </div>

    <main class="document">
        <div class="doctabs">
            <button>Start <i class="close"></i></button>
            <button class="active">Blech2* <i class="close"></i></button>
            <button class="add" aria-label="Neue Zeichnung"><i class="plus"></i></button>
        </div>
        <div class="canvas">
            <div class="view">
                <svg class="model" viewBox="546 179 1353 985">
                    <g stroke="#26373a" stroke-width="1">
                        <path fill="#345359" d="M857 607l265-1 288 304-5 45 131 82-65 1H1291z"/>
                        <path fill="#639da7" d="M857 606l11-21 266-1-12 22z"/>
                        <path fill="#4c7e85" d="M1122 605l12-21 294 306-11 21z"/>
                        <path fill="#38575b" d="M1410 910l176 20 39 47-220-22z"/>
                        <path fill="#2b464b" stroke="none" d="M1405 955l220 22 61 54 27 24-177-18z"/>
                        <path fill="#5f9aa5" d="M1417 911l11-21 170 18-12 21z"/>
                        <path fill="#8fa9b4" stroke="none" d="M1686 1031l40 4-13 21z"/>
                    </g>
                    <path class="edge" d="M1586 929l39 48 61 54 27 25"/>
                    <path class="hot" d="M857 607l200-1M1175 661l242 250 169 18"/>
                    <path stroke="#0fa04a" stroke-width="4" d="M1122 606h-52"/>
                    <path fill="#0b8a3e" d="M1058 606l14-7q3 7 0 14z"/>
                    <path stroke="#12a37b" d="M1050 603v11"/>
                    <path stroke="#b8484d" stroke-width="4" d="M1122 606l46 47"/>
                    <path fill="#c0565a" d="M1177 662l-15-7q2-9 9-9z"/>
                    <path stroke="#8b8f92" d="M1190 660l-13 17"/>
                    <path stroke="#0b62d6" stroke-width="4" d="M1122 605l33-62"/>
                    <path fill="#0a50b4" d="M1163 530l-14 11q4 6 11 6z"/>
                    <text x="1159" y="530">Z</text>
                    <path class="pick" d="M555 708h10v10h-10z"/>
                </svg>
                <svg class="lookfrom" viewBox="0 0 92 92">
                    <circle cx="46" cy="46" r="46"/>
                    <path d="M43 7h6l-3 5zM43 85h6l-3-5zM7 43v6l5-3zM85 43v6l-5-3zM17 20l5 2-5 3zM75 20l-5 2 5 3zM17 74l5-2-5-3zM75 74l-5-2 5-3z"/>
                </svg>
                <div class="prompt">
                    <h4>BKBIEGUNGERZ</h4>
                    <button>Gesamtes Model</button>
                    <button>Alle Elemente wählen</button>
                    <hr>
                    <button>Zum Satz hinzufügen</button>
                    <button>Vorherige Auswahl</button>
                    <button>Letztes Objekt in Zeichnung</button>
                    <hr>
                    <button>Fenster Innenseite</button>
                    <button>Kreuzen Fensters</button>
                    <button>Fenster Außenseite</button>
                    <hr>
                    <button>Fenster Polygon</button>
                    <button>Kreuzen Polygon</button>
                    <button>Außen Polygon</button>
                    <hr>
                    <button>Fenster Kreis</button>
                    <button>Kreuzen Kreis</button>
                    <button>Außen Kreis</button>
                    <hr>
                    <button>Punkt</button>
                    <hr>
                    <button>Zaun</button>
                    <hr>
                    <button>Nach Eigenschaften wählen...</button>
                    <hr>
                    <button>Auswahlmethoden...</button>
                    <hr>
                    <button>Abbrechen</button>
                </div>
                <div class="cmdline">
                    <i class="vdots"></i>
                    <div>Harte Kanten, Verbindungen, Laschen oder 3D Volumenkörper wählen oder [<button><b>G</b>esamtes model</button>/<button>auswahl-optionen (<b>?</b>)</button>] &lt;<button>Gesamtes Model</button>&gt;:</div>
                    <button class="min" aria-label="Minimieren"></button>
                </div>
            </div>
            <div class="vscroll">
                <button aria-label="Hoch"><i class="chev up"></i></button>
                <div class="track" style="--before:120;--size:465;--after:357"><i></i></div>
                <button aria-label="Runter"><i class="chev down"></i></button>
            </div>
        </div>
        <div class="layouts">
            <button class="nav" aria-label="Erstes"><svg viewBox="0 0 12 12"><path d="M2 1v10M9 1L4 6l5 5z"/></svg></button>
            <button class="nav" aria-label="Vorheriges"><svg viewBox="0 0 12 12"><path d="M8 1L3 6l5 5z"/></svg></button>
            <button class="nav" aria-label="Nächstes"><svg viewBox="0 0 12 12"><path d="M4 1l5 5-5 5z"/></svg></button>
            <button class="nav" aria-label="Letztes"><svg viewBox="0 0 12 12"><path d="M10 1v10M3 1l5 5-5 5z"/></svg></button>
            <i class="sheet"></i>
            <button class="tab active">Model</button>
            <button class="tab">Layout1</button>
            <button class="tab">Layout2</button>
            <button class="tab">+</button>
            <div class="hscroll">
                <button aria-label="Links"><i class="chev lt"></i></button>
                <div class="track" style="--before:132;--size:314;--after:189"><i></i></div>
                <button aria-label="Rechts"><i class="chev rt"></i></button>
            </div>
            <i class="corner"></i>
        </div>
    </main>
</div>

<footer class="status">
    <span class="ready">Bereit</span>
    <span class="coords">255.78, 1467.84, 0</span>
    <span>Standard</span>
    <span>ISO-25</span>
    <span>Mechanical</span>
    <span class="off">FANG</span>
    <span class="off">RASTER</span>
    <span class="off">ORTHO</span>
    <span class="off">POLAR</span>
    <span class="on">OFANG</span>
    <span class="on">OTRACK</span>
    <span class="off last">LST</span>
</footer>

<script src="app.js"></script>
</body>
</html>
```

FILE: styles.css
```css
* {
    box-sizing: border-box;
}
body {
    margin: 0;
    height: 100vh;
    display: flex;
    flex-direction: column;
    overflow: hidden;
    background: #2d3035;
    color: #e4e4e4;
    font: 12px/16px "Noto Sans", "Open Sans", sans-serif;
}
button, select, input {
    font: inherit;
    color: inherit;
    background: none;
    border: 0;
    padding: 0;
    margin: 0;
    appearance: none;
}
h3, h4, p, ul {
    margin: 0;
    padding: 0;
}
a {
    color: inherit;
    text-decoration: none;
}
i {
    display: block;
}

/* icons */
.sprite {
    position: absolute;
    width: 0;
    height: 0;
}
svg {
    display: block;
    fill: none;
    overflow: visible;
}
symbol * {
    vector-effect: non-scaling-stroke;
}
.ic {
    width: 20px;
    height: 20px;
    flex: none;
}
.w { stroke: #a9adb0; }
.wd { stroke: #a9adb0; stroke-dasharray: 2 2; }
.wt { stroke: #e6e6e6; stroke-width: 2; }
.b { stroke: #3b7fd6; }
.bs { stroke: #3f8ee8; fill: #2d3035; }
.bq { stroke: #3d6fb0; fill: #78b4f0; stroke-width: 2; }
.r { stroke: #cf2228; }
.g { stroke: #14a81e; stroke-width: 2; }
.o { stroke: #f08a4b; }
.ox { stroke: #f0563a; stroke-width: 3; }
.y { stroke: #f5c41c; }
.n { stroke: #6b5a30; }
.fw { fill: #e6e6e6; }
.fb { fill: #3d92ec; }
.fs { fill: #3f7fd8; }
.fc { fill: #1b6fae; }
.fg { fill: #14a81e; }
.fr { fill: #cf2228; }
.frd { fill: #7c1b22; }
.fo { fill: #f5b324; }
.fy { fill: #fbd634; }
.fl { fill: #c49a3f; }
.fgr { fill: #85888b; }

.dots {
    width: 20px;
    height: 4px;
    background: radial-gradient(circle, #c8c8c8 1px, transparent 2px) 0 0 / 5px 4px;
}
.vdots {
    width: 4px;
    height: 20px;
    background: radial-gradient(circle, #d8d8d8 1px, transparent 2px) 0 0 / 4px 5px;
}
.chev {
    width: 6px;
    height: 6px;
    border: solid #505357;
    border-width: 2px 2px 0 0;
}
.chev.up { transform: rotate(-45deg); }
.chev.down { transform: rotate(135deg); }
.chev.lt { transform: rotate(-135deg); }
.chev.rt { transform: rotate(45deg); }

/* top icon bar */
.quickbar {
    display: flex;
    align-items: center;
    height: 27px;
    flex: none;
    padding-left: 2px;
}
.tools {
    display: flex;
    align-items: center;
}
.quickbar .tools:first-child {
    width: 231px;
    justify-content: space-between;
}
.quickbar .tools:last-child {
    flex: 1;
    justify-content: space-between;
    padding-left: 4px;
    margin-right: -6px;
}
.tb {
    display: grid;
    place-items: center;
    width: 22px;
    height: 23px;
    flex: none;
}
.tb.on {
    background: #46647f;
}
.tools .sep {
    width: 1px;
    height: 22px;
    background: #45484c;
}
.layer {
    display: flex;
    align-items: center;
    gap: 2px;
    width: 231px;
    height: 23px;
    padding: 0 6px 0 3px;
    background: #404247;
}
.layer .ic {
    width: 19px;
}
.layer select {
    flex: 1;
    font-size: 14px;
}
.layer .chev {
    border-width: 1px 1px 0 0;
    border-color: #a0a3a6;
}
.swatch {
    width: 20px;
    height: 20px;
    background: #dedede;
}

/* ribbon tabs */
.tabs {
    display: flex;
    flex: none;
    height: 28px;
    padding-left: 7px;
    background: #17181a;
    font-size: 16px;
    line-height: 28px;
}
.tabs a {
    min-width: 95px;
    padding: 0 4px;
    text-align: center;
}
.tabs .active {
    background: #2d3035;
}
.app {
    width: 28px;
    background: #0a6cf0;
}
.app path {
    stroke: #fff;
    stroke-width: 3;
}
.app .corner {
    fill: #fff;
    stroke: none;
}

/* ribbon */
.ribbon {
    display: flex;
    flex: none;
    height: 103px;
    overflow: hidden;
    font: 13px/17px "Open Sans", "Noto Sans", sans-serif;
}
.group {
    display: flex;
    flex-direction: column;
    flex: none;
    border-right: 1px solid #3a3d41;
}
.group h3 {
    font-size: 13px;
    line-height: 20px;
    text-align: center;
}
.cmds {
    display: flex;
    height: 82px;
    padding-top: 2px;
}
.ebene { width: 107px; }
.zeichnen { width: 394px; }
.erstellen { width: 296px; }
.aendern { width: 528px; }
.bearbeiten { width: 228px; }
.parametrieren { width: 257px; }
.waehlen { width: 116px; }
.ebene {
    padding-left: 6px;
}
.zeichnen .cmds {
    padding-left: 2px;
}
.erstellen .cmds,
.parametrieren .cmds {
    padding-left: 5px;
}
.aendern .cmds {
    padding-left: 3px;
}
.big {
    flex: none;
    min-width: 42px;
    padding: 0 2px;
    white-space: nowrap;
    align-self: flex-start;
}
.zeichnen .big {
    min-width: 44px;
    padding: 0 3px;
}
.ebene .big {
    width: 100px;
}
.aendern .big {
    width: 56px;
}
.big svg {
    width: 38px;
    height: 38px;
    margin: 2px auto;
}
.big .w, .big .b {
    stroke-width: 2;
}
.dd::after {
    content: "";
    display: inline-block;
    margin-left: 1px;
    border: 4px solid transparent;
    border-top: 5px solid #e4e4e4;
    border-bottom: 0;
    vertical-align: middle;
}
.col .dd::after,
.icongrid .dd::after,
.big .dd:empty::after {
    margin: 0;
}
.col {
    display: flex;
    flex-direction: column;
    padding-left: 1px;
}
.col button {
    display: flex;
    align-items: center;
    height: 23px;
    white-space: nowrap;
}
.low {
    padding-top: 6px;
}
.c1 { width: 145px; }
.c2 { width: 106px; }
.c3 { width: 124px; }
.c4 { width: 131px; margin-left: 7px; }
.icongrid {
    display: grid;
    grid-auto-rows: 23px;
    height: 74px;
}
.icongrid button {
    display: flex;
    align-items: center;
}
.params {
    grid-template-columns: repeat(4, 24px) 32px;
    padding-left: 4px;
    border-left: 1px solid #3a3d41;
}
.select {
    grid-template-columns: 35px 35px 35px;
    padding-left: 9px;
}
.formula span {
    width: 20px;
    font-size: 10px;
    line-height: 10px;
    white-space: nowrap;
}

/* left dock */
.workspace {
    display: flex;
    flex: 1;
    min-height: 0;
}
.left {
    display: flex;
    flex-direction: column;
    width: 510px;
}
.dock-grip {
    flex: none;
    display: grid;
    justify-content: center;
    height: 12px;
    padding-top: 1px;
}
.panels {
    display: flex;
    flex: 1;
    min-height: 0;
}
.sidebar {
    width: 54px;
    background: #17181b;
}
.sidebar button {
    display: grid;
    place-items: center;
    width: 100%;
    height: 60px;
    padding-right: 2px;
}
.sidebar .active {
    background: #1f2329;
}
.sidebar svg {
    width: 28px;
    height: 28px;
}
.sidebar .w {
    stroke: #d5d7d9;
}
.browser {
    display: flex;
    flex-direction: column;
    flex: 1;
    min-width: 0;
    padding-left: 4px;
}
.browser .tools {
    gap: 2px;
    height: 29px;
}
.browser .tools .sep {
    margin: 0 1px;
}
.box {
    position: relative;
    display: flex;
    border: 1px solid #55585c;
    border-right: 0;
}
.treebox {
    height: 432px;
    margin-bottom: 3px;
    overflow: hidden;
}
.propbox {
    flex: 1;
    min-height: 0;
}
.vscroll {
    display: flex;
    flex-direction: column;
    width: 22px;
    flex: none;
    background: #f0f0f0;
}
.vscroll button, .hscroll button {
    display: grid;
    place-items: center;
    width: 20px;
    height: 20px;
}
.track {
    display: flex;
    flex: 1;
    flex-direction: column;
}
.track::before {
    content: "";
    flex: var(--before) 1 0;
}
.track::after {
    content: "";
    flex: var(--after) 1 0;
}
.track i {
    flex: var(--size) 1 0;
    background: #cdcdcd;
}

.tree {
    display: grid;
    flex: 1;
    height: 445px;
    list-style: none;
    padding-top: 2px;
    background: linear-gradient(#3e4246, #3e4246) 8px 20px / 1px 100% no-repeat;
}
.tree li {
    display: flex;
    align-items: center;
    padding-left: 28px;
    gap: 3px;
    background: linear-gradient(#3e4246, #3e4246) 9px 50% / 18px 1px no-repeat;
}
.tree li.root {
    padding-left: 3px;
    font-weight: bold;
    background: none;
}
.tree li.root .ic {
    margin-left: 3px;
}
.tree li.root span {
    padding: 2px 1px;
    color: #fff;
    background: #8e9192;
}
.tree li.folder {
    padding-left: 13px;
}
.tree li.alert {
    color: #e0442c;
}
.tog {
    width: 11px;
    height: 11px;
    flex: none;
    background: linear-gradient(#2b3a8c, #2b3a8c) 50% 50% / 7px 1px no-repeat, #f4f4f4;
}
.tog.plus {
    background: linear-gradient(#2b3a8c, #2b3a8c) 50% 50% / 7px 1px no-repeat,
        linear-gradient(#2b3a8c, #2b3a8c) 50% 50% / 1px 7px no-repeat, #f4f4f4;
}

/* properties */
.proplist {
    flex: 1;
    min-width: 0;
    overflow: hidden;
}
.props {
    width: 100%;
    height: 533px;
    table-layout: fixed;
    border-spacing: 0;
}
.props td, .props th {
    padding: 0;
    font-weight: normal;
    text-align: left;
    line-height: 17px;
    white-space: nowrap;
    overflow: hidden;
    border-bottom: 1px solid #282b2f;
}
.props td:first-child {
    width: 19px;
    padding-left: 3px;
    line-height: 0;
    border: 0;
}
.props th {
    width: 197px;
    padding-left: 2px;
}
.props th .tog {
    display: inline-block;
    vertical-align: -1px;
    margin-right: 5px;
}
.props th.l1 {
    padding-left: 5px;
}
.props th.l1.leaf {
    padding-left: 21px;
}
.props th.l2 {
    padding-left: 40px;
}
.props td:last-child {
    padding-left: 2px;
    border-left: 1px solid #282b2f;
}
.props .dim td:last-child {
    color: #777a7d;
}
.props .cat th, .props .cat td:last-child {
    background: #404247;
    border-color: #404247;
    font-weight: bold;
    color: #fff;
}
.props .sel th {
    background: #0078d7;
    color: #fff;
}
.props .sel td:last-child {
    padding: 0;
    border: 0;
    background: #404247;
}
.edit {
    display: flex;
    align-items: center;
}
.edit input {
    width: 129px;
    height: 20px;
    padding-left: 3px;
    color: #222;
    background: #fff;
}
.edit select {
    width: 70px;
    margin-left: 3px;
}
.edit .chev {
    border-color: #a0a3a6;
    border-width: 1px 1px 0 0;
}
.lockicon {
    display: inline-block;
    width: 16px;
    height: 17px;
    margin-left: 2px;
    vertical-align: top;
}
.lockicon path:first-child {
    stroke: #dcdcdc;
    stroke-width: 2;
}
.lockicon path:last-child {
    fill: #dcdcdc;
}
.tooltip {
    position: absolute;
    left: 274px;
    top: 261px;
    height: 22px;
    padding: 0 3px;
    font-size: 13px;
    line-height: 20px;
    color: #666;
    background: #fff;
    border: 1px solid #9a9a9a;
}
.ibeam {
    position: absolute;
    left: 268px;
    top: 250px;
    width: 12px;
    height: 22px;
}
.ibeam path {
    stroke: #222;
    stroke-width: 2;
}
.hint {
    height: 20px;
    line-height: 22px;
}

/* draw tools column */
.drawbar {
    width: 36px;
    padding-top: 6px;
}
.drawbar .tools {
    flex-direction: column;
    padding-left: 6px;
}
.drawbar .sep {
    width: 22px;
    height: 1px;
    margin: 1px 0 2px;
}
.drawbar .vdots {
    width: 20px;
    height: 4px;
    margin: 0 0 2px;
    background: radial-gradient(circle, #c8c8c8 1px, transparent 2px) 0 0 / 5px 4px;
}
.drawbar .tools .vdots:not(:first-child) {
    margin: 6px 0 5px;
}

/* drawing area */
.document {
    display: flex;
    flex-direction: column;
    flex: 1;
    min-width: 0;
}
.doctabs {
    display: flex;
    height: 21px;
    flex: none;
    padding-bottom: 1px;
    font-weight: 500;
}
.doctabs button {
    display: flex;
    align-items: center;
    gap: 17px;
    padding: 0 9px 0 12px;
    background: #17181a;
}
.doctabs .active {
    background: #2d3035;
    font-weight: bold;
}
.doctabs .add {
    width: 28px;
    padding: 0 8px;
}
.close, .plus {
    width: 13px;
    height: 13px;
    background: linear-gradient(#d0d0d0, #d0d0d0) 50% 50% / 13px 1px no-repeat,
        linear-gradient(#d0d0d0, #d0d0d0) 50% 50% / 1px 13px no-repeat;
}
.close {
    transform: rotate(45deg);
}
.canvas {
    display: flex;
    flex: 1;
    min-height: 0;
}
.canvas .vscroll {
    width: 21px;
}
.view {
    position: relative;
    flex: 1;
    min-width: 0;
    background: linear-gradient(#777 0%, #777 45%, #414141 100%);
}
.model {
    width: 100%;
    height: 100%;
}
.model .hot {
    stroke: #ecd04a;
    stroke-width: 3;
}
.model .edge {
    stroke: #8a9295;
    stroke-width: 1;
}
.model .pick {
    stroke: #3a3a3a;
}
.model text {
    fill: #5d86c4;
    font: 300 24px "Open Sans", sans-serif;
}
.lookfrom {
    position: absolute;
    top: 14px;
    right: 14px;
    width: 92px;
    height: 92px;
}
.lookfrom circle {
    fill: #b4b4b4;
}
.lookfrom path {
    fill: #6d6d6d;
}
.prompt {
    position: absolute;
    top: 4px;
    right: 98px;
    width: 177px;
    padding-bottom: 1px;
    color: #222;
    background: #f0f0f0;
    border: 1px solid #fafafa;
    box-shadow: 0 0 3px #333;
}
.prompt h4 {
    height: 32px;
    padding-left: 8px;
    font-size: 13px;
    font-weight: normal;
    line-height: 34px;
    color: #a09a9c;
    background: #fff;
}
.prompt button {
    display: block;
    width: 100%;
    padding-left: 1px;
    text-align: left;
    line-height: 20px;
    white-space: nowrap;
}
.prompt hr {
    height: 1px;
    margin: 0;
    border: 0;
    background: #bcbcbc;
}
.cmdline {
    position: absolute;
    left: 35px;
    right: 34px;
    bottom: 7px;
    display: flex;
    align-items: center;
    gap: 4px;
    height: 21px;
    padding: 0 10px 0 4px;
    background: #38393b;
    font: 15px/20px "DejaVu Sans Mono", monospace;
    color: #dadada;
    white-space: pre;
}
.cmdline div {
    flex: 1;
}
.cmdline div button {
    background: #626b75;
}
.cmdline b {
    font-weight: normal;
    color: #e6aa1e;
}
.cmdline .min {
    width: 14px;
    height: 7px;
    background: #f4f4f4;
}

/* layout tabs */
.layouts {
    display: flex;
    align-items: stretch;
    flex: none;
    height: 21px;
    border-bottom: 1px solid #55585c;
}
.layouts .nav {
    display: grid;
    place-items: center;
    width: 20px;
    background: #17181a;
    border: 1px solid #6a6d70;
    border-right: 0;
}
.layouts .nav svg {
    width: 12px;
    height: 12px;
    fill: #f0f0f0;
    stroke: #f0f0f0;
}
.sheet {
    width: 16px;
    margin: 2px 4px;
    border: 1px solid #b0b0b0;
    background: repeating-linear-gradient(transparent 0 4px, #b0b0b0 4px 5px);
}
.layouts .tab {
    padding: 0 5px 0 4px;
    background: #17181a;
    border-left: 1px solid #2d3035;
}
.layouts .tab.active {
    padding: 0 3px 0 0;
    font-weight: bold;
    background: none;
}
.hscroll {
    display: flex;
    width: 49%;
    margin-left: auto;
    background: #f0f0f0;
}
.hscroll .track {
    flex-direction: row;
}
.layouts .corner {
    width: 21px;
    background: #999;
}

/* status bar */
.status {
    display: flex;
    flex: none;
    height: 14px;
    overflow: hidden;
    background: #17181a;
    border-bottom: 2px solid #14806a;
    line-height: 17px;
    white-space: nowrap;
}
.status span {
    padding: 0 2px;
    border-left: 1px solid #44474a;
}
.status .ready {
    flex: 1;
    padding: 0;
    border: 0;
}
.status .coords {
    padding-left: 21px;
}
.status .off {
    padding: 0 3px 0 5px;
    color: #5d6063;
}
.status .on {
    background: #3c3f43;
}
.status .last {
    margin-right: -10px;
}
```

FILE: app.js
```js
const $ = id => document.getElementById(id);

// icon toolbars: "-" is a separator, "|" a grip, "*" marks a pressed tool
document.querySelectorAll('[data-icons]').forEach(bar => {
    bar.innerHTML = bar.dataset.icons.split(' ').map(name => {
        if (name === '-') return '<i class="sep"></i>';
        if (name === '|') return '<i class="vdots"></i>';
        const on = name[0] === '*';
        if (on) name = name.slice(1);
        return `<button class="tb${on ? ' on' : ''}" aria-label="${name}"><svg class="ic"><use href="#i-${name}"/></svg></button>`;
    }).join('');
});

const features = [
    ['lasche', 'Lasche_1', 'alert'], ['lasche', 'Lasche_2'], ['lasche', 'Lasche_3'], ['lasche', 'Lasche_4'],
    ['fase', 'Fase_1'], ['lasche', 'Lasche_5'], ['lasche', 'Lasche_6', 'alert'], ['lasche', 'Lasche_7'],
    ['lasche', 'Lasche_8'], ['fase', 'Fase_2'], ['fase', 'Fase_3'], ['fase', 'Fase_4'],
    ['notch', 'BiegeAusklinkung_1'], ['notch', 'BiegeAusklinkung_2'], ['notch', 'BiegeAusklinkung_3'],
    ['bieg2', 'Biegung_1'], ['bieg2', 'Biegung_2'], ['bieg2', 'Biegung_3'], ['notch', 'EckAusklinkung_1']
];
const icon = name => `<svg class="ic"><use href="#i-${name}"/></svg>`;
$('tree').innerHTML =
    `<li class="root"><button class="tog" aria-label="Zuklappen"></button>${icon('part')}<span>Blech2</span></li>` +
    `<li class="folder"><button class="tog plus" aria-label="Aufklappen"></button>${icon('folder')}Körper</li>` +
    features.map(([ic, text, cls]) => `<li class="${cls || ''}">${icon(ic)}${text}</li>`).join('');

// [level, toggle, name, value, row class]
const props = [
    [0, '', 'Datei', 'C:\\Users\\hsa\\Desktop\\Blech2.dwg', 'dim'],
    [0, '-', 'Blechkonstruktion', '', 'cat'],
    [0, '', 'Objekthöhe', '<svg class="lockicon" viewBox="0 0 16 18"><path d="M4 9V5a4 4 0 0 1 8 0v4"/><path d="M0 8h16v10H0z"/></svg>2 mm', ''],
    [0, '-', 'Modellieren', '', ''],
    [1, '+', 'Biegeradius', '2.00 mm', 'dim'],
    [1, '+', 'Scharfe Biegeradius Begrenzung', '10.00 mm', 'dim'],
    [1, '', 'Ausgeformte Biegung Unterteilung', '10', ''],
    [1, '+', 'Biegeausklinkungs Breite', '1.00 mm', 'dim'],
    [1, '+', 'Ausklinkungs Verlängerung', '0.20 mm', 'dim'],
    [1, '+', 'Eckausklinkungs Durchmesser', 'Minimale möglich', 'dim'],
    [1, '-', 'Verbindungs Lücke', '2.00 µm', 'dim'],
    [2, '', 'Typ', 'Absoluter Wert', ''],
    [2, '', '<label for="wert">Wert</label>', '<div class="edit"><input id="wert" value="6"><select aria-label="Einheit"><option>µm</option></select><i class="chev down"></i></div>', 'sel'],
    [1, '', 'Verbindungs Ausrichtung', 'Deaktiviert', ''],
    [1, '+', 'Gehrungs Lücke', '0.20 mm', 'dim'],
    [1, '+', 'Gehrungs Erweiterung', '0.20 mm', 'dim'],
    [1, '+', 'Rippen Profil Radius', '4.00 mm', 'dim'],
    [1, '+', 'Rippen Abrundungs Radius', '2.00 mm', 'dim'],
    [1, '+', 'Rippen Verrundungs Radius', '20.00 mm', 'dim'],
    [1, '', 'Lasche Schlitz Anzahl', '2', ''],
    [1, '+', 'Laschen Höhe', '2.00 mm', 'dim'],
    [1, '+', 'Laschen Abstand', '40.00 mm', 'dim'],
    [1, '+', 'Laschen Länge', '8.00 mm', 'dim'],
    [1, '+', 'Zungen Freiraum', '0.20 mm', 'dim'],
    [1, '', 'Laschen Kanten Typ', 'Scharfe Kanten', ''],
    [1, '+', 'Bördelungs Lücke', '20.00 µm', 'dim']
];
const tog = t => t ? `<button class="tog${t === '+' ? ' plus' : ''}" aria-label="Umschalten"></button>` : '';
$('props').innerHTML = props.map(([lvl, t, name, value, cls]) =>
    `<tr class="${cls}"><td>${lvl ? '' : tog(t)}</td>` +
    `<th class="l${lvl}${t ? '' : ' leaf'}">${lvl ? tog(t) : ''}${name}</th><td>${value}</td></tr>`
).join('');
```
